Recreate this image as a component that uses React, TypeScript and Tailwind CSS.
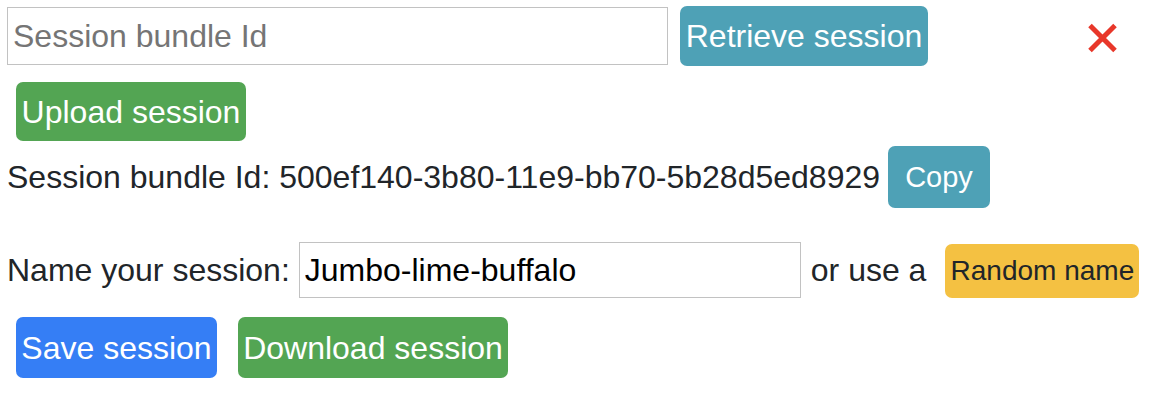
import React from "react";

const btn =
  "flex items-center justify-center rounded-[7px] text-white leading-none whitespace-nowrap";

const App = () => {
  return (
    <div className="w-[1150px] h-[418px] bg-white font-['Liberation_Sans',Arial,sans-serif] text-[32px] text-[#212529]">
      {/* retrieve row */}
      <div className="flex items-start pl-[7px] pt-[6px]">
        <input
          className="mt-[1px] w-[661px] h-[58px] border border-[#c2c2c2] px-[5px] text-[32px] outline-none placeholder:text-[#757575]"
          placeholder="Session bundle Id"
        />
        <button className={`${btn} ml-[12px] w-[248px] h-[60px] bg-[#4ea1b6] text-[32px]`}>
          Retrieve session
        </button>
        <svg
          className="ml-[159px] mt-[17px]"
          width="31"
          height="30"
          viewBox="0 0 31 30"
        >
          <path
            d="M3 2.5 L28 27.5 M28 2.5 L3 27.5"
            stroke="#e8372a"
            strokeWidth="5"
          />
        </svg>
      </div>

      <div className="mt-[16px] ml-[16px] flex">
        <button className={`${btn} w-[230px] h-[59px] bg-[#53a553]`}>
          Upload session
        </button>
      </div>

      {/* bundle id */}
      <div className="mt-[5px] pl-[7px] flex items-center">
        <span>Session bundle Id: 500ef140-3b80-11e9-bb70-5b28d5ed8929</span>
        <button className={`${btn} ml-[8px] w-[102px] h-[62px] bg-[#4ea1b6] text-[29px]`}>
          Copy
        </button>
      </div>

      {/* name row */}
      <div className="mt-[34px] pl-[7px] flex items-center">
        <span>Name your session:</span>
        <input
          className="ml-[9px] w-[502px] h-[56px] border border-[#c2c2c2] px-[5px] text-[32px] text-black outline-none"
          defaultValue="Jumbo-lime-buffalo"
        />
        <span className="ml-[10px]">or use a</span>
        <button className={`${btn} ml-[19px] mt-[2px] w-[194px] h-[54px] bg-[#f4c142] text-[28px] !text-[#212529]`}>
          Random name
        </button>
      </div>

      <div className="mt-[19px] ml-[16px] flex gap-[21px]">
        <button className={`${btn} w-[201px] h-[61px] bg-[#357ef5]`}>
          Save session
        </button>
        <button className={`${btn} w-[270px] h-[61px] bg-[#53a553]`}>
          Download session
        </button>
      </div>
    </div>
  );
};

export default App;
